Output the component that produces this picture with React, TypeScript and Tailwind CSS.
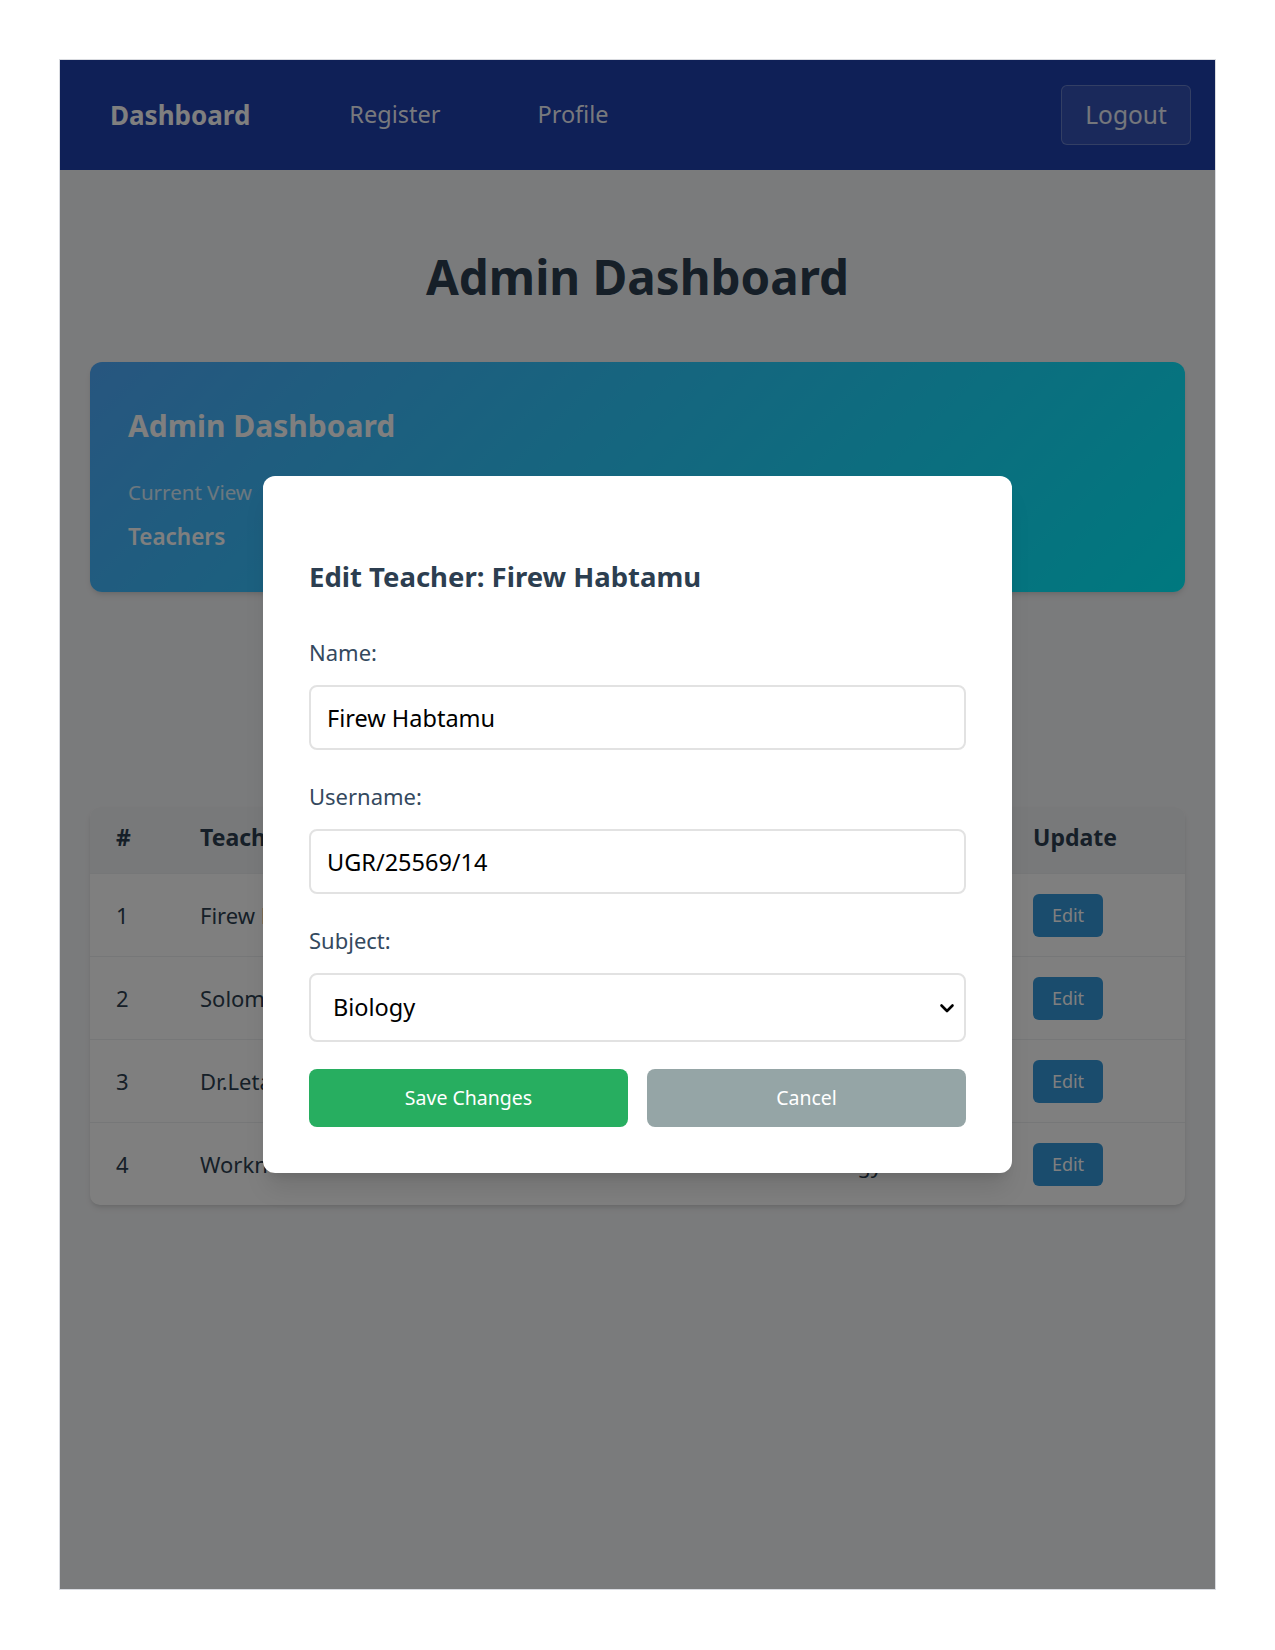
export default function App() {
  const teachers = [
    ["1", "Firew Habtamu", "UGR/25569/14", "Biology"],
    ["2", "Solomon Kebede", "UGR/25570/14", "Physics"],
    ["3", "Dr.Leta Bekele", "UGR/25571/14", "Chemistry"],
    ["4", "Workneh Tadesse", "UGR/25/14", "Biology"],
  ];

  return (
    <div className="bg-white p-[59px] font-['Noto_Sans',sans-serif]">
      <div className="relative h-[1531px] border border-[#d9dbe0] bg-[#f5f6f8]">

        {/* NAV */}
        <nav className="flex h-[110px] items-center justify-between bg-[#1e40af] pl-[50px] pr-[24px]">
          <div className="flex items-center">
            <span className="text-[26px] font-bold text-white">Dashboard</span>
            <span className="ml-[99px] text-[23.5px] text-white/95">Register</span>
            <span className="ml-[97px] text-[23.5px] text-white/95">Profile</span>
          </div>
          <button className="h-[60px] w-[130px] rounded-md border border-white/25 bg-white/10 text-[24.5px] text-white/90">
            Logout
          </button>
        </nav>

        {/* CONTENT */}
        <div className="px-[30px]">
          <h1 className="mt-[79px] text-center text-[47.5px] font-bold leading-[56px] text-[#2c3e50]">
            Admin Dashboard
          </h1>

          <div className="mt-[57px] flex h-[230px] flex-col rounded-xl bg-[linear-gradient(135deg,#4facfe_0%,#00f2fe_100%)] px-[38px] pt-[46px] shadow-md">
            <h2 className="text-[30px] font-bold leading-[36px] text-white">Admin Dashboard</h2>
            <p className="mt-[34px] text-[20.5px] leading-[28px] text-white/80">Current View</p>
            <p className="mt-[16px] text-[22.5px] font-semibold leading-[30px] text-white">Teachers</p>
          </div>

          <div className="mt-[215px] overflow-hidden rounded-[10px] bg-white shadow-md">
            <div className="grid h-[66px] grid-cols-[84px_385px_220px_233px_1fr] items-center bg-[#f1f2f4] pb-[6px] text-[23px] font-bold text-[#2c3e50]">
              <span className="pl-[26px]">#</span>
              <span className="pl-[26px]">Teacher Name</span>
              <span className="pl-[26px]">Username</span>
              <span className="pl-[26px]">Subject</span>
              <span className="pl-[21px]">Update</span>
            </div>
            {teachers.map(([no, name, user, subject]) => (
              <div
                key={no}
                className="grid h-[83px] grid-cols-[84px_385px_220px_233px_1fr] items-center border-t border-[#eceef0] text-[22px] text-[#2c3e50]"
              >
                <span className="pl-[26px]">{no}</span>
                <span className="pl-[26px]">{name}</span>
                <span className="pl-[26px]">{user}</span>
                <span className="pl-[26px]">{subject}</span>
                <span className="pl-[21px]">
                  <button className="h-[43px] w-[70px] rounded-md bg-[#3498db] text-[18px] text-white">
                    Edit
                  </button>
                </span>
              </div>
            ))}
          </div>
        </div>

        {/* MODAL */}
        <div className="absolute inset-0 flex items-center justify-center bg-black/50">
          <div className="w-[749px] rounded-xl bg-white px-[46px] pb-[46px] pt-[84px] shadow-xl">
            <h3 className="text-[27.5px] font-bold leading-[33px] text-[#2c3e50]">
              Edit Teacher: Firew Habtamu
            </h3>

            <label className="mt-[43px] block text-[22px] leading-[33px] text-[#34495e]">Name:</label>
            <input
              readOnly
              value="Firew Habtamu"
              className="mt-[16px] block h-[65px] w-full rounded-lg border-2 border-[#e2e2e2] px-[16px] text-[23.5px] text-black outline-none"
            />

            <label className="mt-[30px] block text-[22px] leading-[33px] text-[#34495e]">Username:</label>
            <input
              readOnly
              value="UGR/25569/14"
              className="mt-[16px] block h-[65px] w-full rounded-lg border-2 border-[#e2e2e2] px-[16px] text-[23.5px] text-black outline-none"
            />

            <label className="mt-[30px] block text-[22px] leading-[33px] text-[#34495e]">Subject:</label>
            <div className="relative mt-[16px]">
              <select
                defaultValue="Biology"
                className="block h-[69px] w-full appearance-none rounded-lg border-2 border-[#e2e2e2] bg-white pl-[22px] text-[23.5px] text-black outline-none"
              >
                <option>Biology</option>
                <option>Physics</option>
                <option>Chemistry</option>
              </select>
              <svg
                className="pointer-events-none absolute right-[11px] top-1/2 h-[16px] w-[16px] -translate-y-1/2"
                viewBox="0 0 16 16"
                fill="none"
                stroke="black"
                strokeWidth="2.6"
                strokeLinecap="round"
                strokeLinejoin="round"
              >
                <path d="M2.5 5.5 8 11 13.5 5.5" />
              </svg>
            </div>

            <div className="mt-[27px] grid grid-cols-2 gap-[19px]">
              <button className="h-[58px] rounded-lg bg-[#27ae60] text-[19.5px] text-white">Save Changes</button>
              <button className="h-[58px] rounded-lg bg-[#95a5a6] text-[19.5px] text-white">Cancel</button>
            </div>
          </div>
        </div>

      </div>
    </div>
  );
}
